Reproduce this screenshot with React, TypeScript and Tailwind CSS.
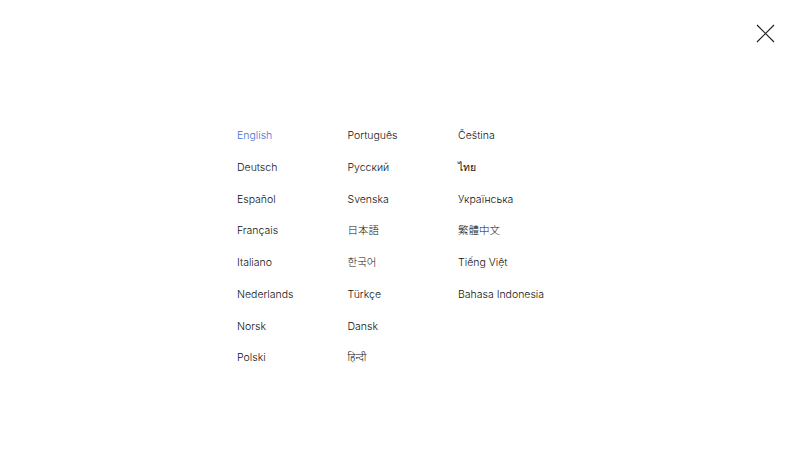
const columns: string[][] = [
  ['English', 'Deutsch', 'Español', 'Français', 'Italiano', 'Nederlands', 'Norsk', 'Polski'],
  ['Português', 'Русский', 'Svenska', '日本語', '한국어', 'Türkçe', 'Dansk', 'हिन्दी'],
  ['Čeština', 'ไทย', 'Українська', '繁體中文', 'Tiếng Việt', 'Bahasa Indonesia'],
]

export default function App() {
  return (
    <div className="w-[800px] h-[450px] bg-white flex flex-col font-['Inter','Noto_Sans','Noto_Sans_CJK_JP',sans-serif]">
      <div className="flex justify-end pt-[24px] pr-[25px]">
        <button className="w-[19px] h-[19px] text-[#222]">
          <svg viewBox="0 0 19 19" className="w-full h-full" fill="none" stroke="currentColor" strokeWidth={1.2}>
            <path d="M1 1l17 17M18 1L1 18" />
          </svg>
        </button>
      </div>
      <div className="flex pl-[237px] pt-[86px]">
        {columns.map((col, i) => (
          <ul key={i} className="w-[110.5px] flex flex-col">
            {col.map((lang) => (
              <li
                key={lang}
                className={`h-[31.75px] text-[10.5px] leading-[14px] font-light ${lang === 'English' ? 'text-[#3f6fd1]' : 'text-[#111]'}`}
              >
                {lang}
              </li>
            ))}
          </ul>
        ))}
      </div>
    </div>
  )
}
